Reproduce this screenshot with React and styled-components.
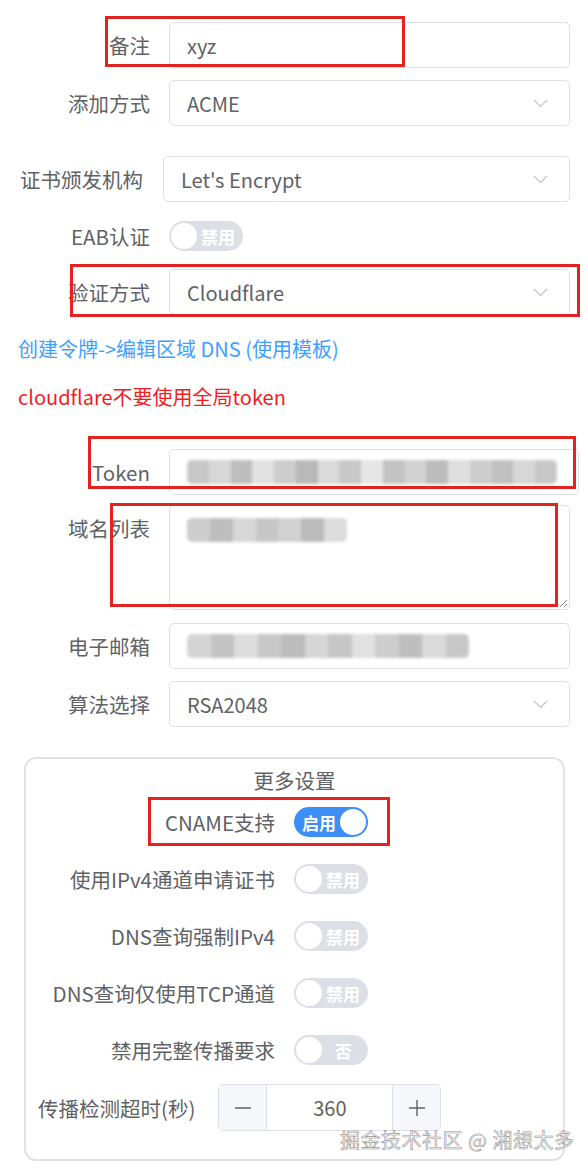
import React from "react";
import styled, { createGlobalStyle } from "styled-components";

const GlobalStyle = createGlobalStyle`
  body {
    margin: 0;
    background: #fff;
    font-family: "Noto Sans CJK SC", "Noto Sans", sans-serif;
    color: #606266;
  }
`;

const Chevron = () => (
  <svg width="15" height="9" viewBox="0 0 15 9">
    <polyline points="1,1 7.5,7.5 14,1" fill="none" stroke="#c0c4cc" strokeWidth="1.2" />
  </svg>
);

const Redacted = ({ width, shades }) => (
  <RedactedBar $w={width}>
    {shades.map((s, i) => (
      <RedactedCell key={i} $shade={s} />
    ))}
  </RedactedBar>
);

const Switch = ({ on, text }) => (
  <StyledSwitch $on={on}>
    <SwitchText $on={on}>{text}</SwitchText>
    <Knob $on={on} />
  </StyledSwitch>
);

const App = () => {
  return (
    <>
      <GlobalStyle />
      <Page>
        <Row>
          <Label>备注</Label>
          <Field>xyz</Field>
        </Row>
        <Row $mt={12}>
          <Label>添加方式</Label>
          <Field>
            ACME
            <Chevron />
          </Field>
        </Row>

        <Row $mt={30} $labelWidth={163}>
          <Label $pr={20}>证书颁发机构</Label>
          <Field>
            Let's Encrypt
            <Chevron />
          </Field>
        </Row>
        <Row $mt={11}>
          <Label>EAB认证</Label>
          <Switch text="禁用" />
        </Row>
        <Row $mt={10}>
          <Label>验证方式</Label>
          <Field>
            Cloudflare
            <Chevron />
          </Field>
        </Row>
        <Note $mt={11} $color="#409eff">创建令牌-&gt;编辑区域 DNS (使用模板)</Note>
        <Note $mt={2} $color="#f21d1d">cloudflare不要使用全局token</Note>

        <Row $mt={29}>
          <Label>Token</Label>
          <Field>
            <Redacted width={370} shades={[200, 215, 190, 225, 205, 185, 218, 200, 230, 195, 210, 188, 222, 205, 192, 215, 200]} />
          </Field>
        </Row>
        <Row $mt={10} $top>
          <Label>域名列表</Label>
          <TextArea>
            <Redacted width={160} shades={[205, 190, 215, 198, 210, 188, 220]} />
            <ResizeHandle viewBox="0 0 8 8" width="8" height="8">
              <line x1="1" y1="8" x2="8" y2="1" stroke="#888" strokeWidth="1" />
              <line x1="5" y1="8" x2="8" y2="5" stroke="#888" strokeWidth="1" />
            </ResizeHandle>
          </TextArea>
        </Row>
        <Row $mt={13}>
          <Label>电子邮箱</Label>
          <Field>
            <Redacted width={282} shades={[212, 195, 220, 200, 188, 214, 198, 225, 205, 190, 218, 200]} />
          </Field>
        </Row>
        <Row $mt={12}>
          <Label>算法选择</Label>
          <Field>
            RSA2048
            <Chevron />
          </Field>
        </Row>

        <MoreBox>
          <BoxTitle>更多设置</BoxTitle>
          <Row $mt={4} $labelWidth={268}>
            <Label>CNAME支持</Label>
            <Switch on text="启用" />
          </Row>
          <Row $mt={11} $labelWidth={268}>
            <Label>使用IPv4通道申请证书</Label>
            <Switch text="禁用" />
          </Row>
          <Row $mt={11} $labelWidth={268}>
            <Label>DNS查询强制IPv4</Label>
            <Switch text="禁用" />
          </Row>
          <Row $mt={11} $labelWidth={268}>
            <Label>DNS查询仅使用TCP通道</Label>
            <Switch text="禁用" />
          </Row>
          <Row $mt={11} $labelWidth={268}>
            <Label>禁用完整传播要求</Label>
            <Switch text="否" />
          </Row>
          <StepperRow>
            <StepperLabel>传播检测超时(秒)</StepperLabel>
            <Stepper>
              <StepButton>
                <svg width="18" height="18" viewBox="0 0 18 18">
                  <line x1="1" y1="9" x2="17" y2="9" stroke="#606266" strokeWidth="1.4" />
                </svg>
              </StepButton>
              <StepValue>360</StepValue>
              <StepButton $right>
                <svg width="18" height="18" viewBox="0 0 18 18">
                  <line x1="1" y1="9" x2="17" y2="9" stroke="#606266" strokeWidth="1.4" />
                  <line x1="9" y1="1" x2="9" y2="17" stroke="#606266" strokeWidth="1.4" />
                </svg>
              </StepButton>
            </Stepper>
          </StepperRow>
        </MoreBox>

        <Highlight $x={105} $y={16} $w={300} $h={51} />
        <Highlight $x={70} $y={264} $w={510} $h={53} />
        <Highlight $x={88} $y={436} $w={488} $h={53} />
        <Highlight $x={110} $y={503} $w={448} $h={104} />
        <Highlight $x={148} $y={797} $w={242} $h={49} />
        <Watermark>掘金技术社区 @ 湘想太多</Watermark>
      </Page>
    </>
  );
};

const Page = styled.div`
  position: relative;
  padding: 22px 18px 13px 0;
`;

const Row = styled.div`
  display: flex;
  align-items: ${(p) => (p.$top ? "flex-start" : "center")};
  min-height: 46px;
  margin-top: ${(p) => p.$mt || 0}px;

  & > :first-child {
    width: ${(p) => p.$labelWidth || 169}px;
  }
`;

const Label = styled.label`
  flex-shrink: 0;
  box-sizing: border-box;
  padding-right: ${(p) => p.$pr || 19}px;
  text-align: right;
  font-size: 20.5px;
  line-height: 46px;
  color: #606266;
  white-space: nowrap;
`;

const Field = styled.div`
  flex: 1;
  box-sizing: border-box;
  height: 46px;
  padding: 0 21px 0 17px;
  border: 1px solid #dcdfe6;
  border-radius: 5px;
  display: flex;
  align-items: center;
  justify-content: space-between;
  font-size: 20px;
  color: #606266;
`;

const TextArea = styled.div`
  position: relative;
  flex: 1;
  box-sizing: border-box;
  height: 105px;
  padding: 12px 17px;
  border: 1px solid #dcdfe6;
  border-radius: 5px;
`;

const ResizeHandle = styled.svg`
  position: absolute;
  right: 2px;
  bottom: 2px;
`;

const RedactedBar = styled.div`
  display: flex;
  width: ${(p) => p.$w}px;
  height: 24px;
  filter: blur(1.5px);
  border-radius: 5px;
  overflow: hidden;
`;

const RedactedCell = styled.div`
  flex: 1;
  background: rgb(${(p) => `${p.$shade}, ${p.$shade}, ${p.$shade}`});
`;

const Note = styled.div`
  margin-top: ${(p) => p.$mt || 0}px;
  padding-left: 18px;
  font-size: 20px;
  line-height: 46px;
  color: ${(p) => p.$color};
`;

const StyledSwitch = styled.div`
  position: relative;
  box-sizing: border-box;
  width: 74px;
  height: 30px;
  border-radius: 15px;
  background: ${(p) => (p.$on ? "#3d8ef5" : "#dcdfe6")};
  display: flex;
  align-items: center;
`;

const SwitchText = styled.span`
  flex: 1;
  text-align: center;
  padding: ${(p) => (p.$on ? "0 28px 0 4px" : "0 4px 0 28px")};
  font-size: 17px;
  font-weight: 700;
  color: #fff;
`;

const Knob = styled.span`
  position: absolute;
  top: 2px;
  ${(p) => (p.$on ? "right: 2px;" : "left: 2px;")}
  width: 26px;
  height: 26px;
  border-radius: 50%;
  background: #fff;
`;

const MoreBox = styled.div`
  margin: 30px 5px 0 24px;
  border: 2px solid #e0e2e7;
  border-radius: 12px;
  padding: 6px 0 28px;
`;

const BoxTitle = styled.div`
  text-align: center;
  font-size: 20.5px;
  line-height: 30px;
  color: #606266;
`;

const StepperRow = styled.div`
  display: flex;
  align-items: center;
  gap: 23px;
  margin-top: 11px;
  padding-left: 12px;
`;

const StepperLabel = styled.span`
  font-size: 20.5px;
  color: #606266;
`;

const Stepper = styled.div`
  display: flex;
  width: 223px;
  height: 47px;
  box-sizing: border-box;
  border: 1px solid #dcdfe6;
  border-radius: 5px;
  overflow: hidden;
`;

const StepButton = styled.div`
  width: 47px;
  display: flex;
  align-items: center;
  justify-content: center;
  background: #f5f7fa;
  ${(p) => (p.$right ? "border-left" : "border-right")}: 1px solid #dcdfe6;
`;

const StepValue = styled.div`
  flex: 1;
  display: flex;
  align-items: center;
  justify-content: center;
  font-size: 20px;
  color: #606266;
`;

const Highlight = styled.div`
  position: absolute;
  left: ${(p) => p.$x}px;
  top: ${(p) => p.$y}px;
  width: ${(p) => p.$w}px;
  height: ${(p) => p.$h}px;
  box-sizing: border-box;
  border: 3px solid #e3231f;
  pointer-events: none;
`;

const Watermark = styled.div`
  position: absolute;
  left: 340px;
  top: 1126px;
  font-size: 20px;
  line-height: 28px;
  color: #f7f7f7;
  -webkit-text-stroke: 0.6px #999;
  letter-spacing: 0.5px;
`;

export default App;
